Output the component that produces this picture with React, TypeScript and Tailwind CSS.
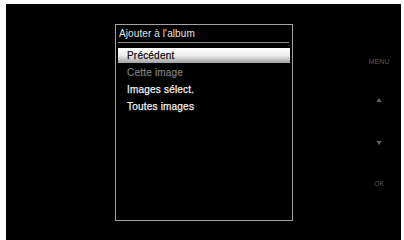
const items = [
  { label: "Précédent", selected: true, disabled: false },
  { label: "Cette image", selected: false, disabled: true },
  { label: "Images sélect.", selected: false, disabled: false },
  { label: "Toutes images", selected: false, disabled: false },
];

export default function App() {
  return (
    <div
      className="w-[404px] h-[240px] bg-white pl-[6px] pt-[4px] pr-[3px] flex overflow-hidden"
      style={{ fontFamily: '"Liberation Sans", Arial, sans-serif' }}
    >
      <div className="flex-1 bg-black flex">
        {/* Album dialog */}
        <div className="ml-[109px] mt-[20px] w-[178px] h-[197px] border border-[#a3a3a3] flex flex-col px-[2px]">
          <div className="h-[17px] flex items-center pl-[1px] text-[10px] tracking-[0.1px] text-[#e6e6e6] leading-none">
            Ajouter à l'album
          </div>
          <div className="h-px bg-[#8c8c8c] mr-[1px]" />
          <div className="mt-[4px] flex flex-col">
            {items.map((item) => (
              <div key={item.label} className="h-[17px] flex items-center">
                <div
                  className={`w-full h-[15px] flex items-center pl-[9px] text-[10px] tracking-[0.2px] leading-none [-webkit-text-stroke:0.25px_currentColor] ${
                    item.selected
                      ? "bg-gradient-to-b from-white via-[#ececec] to-[#a2a2a2] text-[#111]"
                      : item.disabled
                        ? "text-[#7a7a7a]"
                        : "text-[#f0f0f0]"
                  }`}
                >
                  {item.label}
                </div>
              </div>
            ))}
          </div>
        </div>

        {/* Side button hints */}
        <div className="ml-auto mr-[2px] w-[40px] flex flex-col items-center pt-[52px] text-[7px] leading-none text-[#5a5a5a]">
          <div className="h-[10px] flex items-center">MENU</div>
          <svg className="mt-[31px]" width="6" height="6" viewBox="0 0 6 6">
            <path d="M3 1L5.5 5H0.5Z" fill="#6a6a6a" />
          </svg>
          <svg className="mt-[37px]" width="6" height="6" viewBox="0 0 6 6">
            <path d="M0.5 1H5.5L3 5Z" fill="#6a6a6a" />
          </svg>
          <div className="mt-[32px] h-[10px] flex items-center">OK</div>
        </div>
      </div>
    </div>
  );
}
